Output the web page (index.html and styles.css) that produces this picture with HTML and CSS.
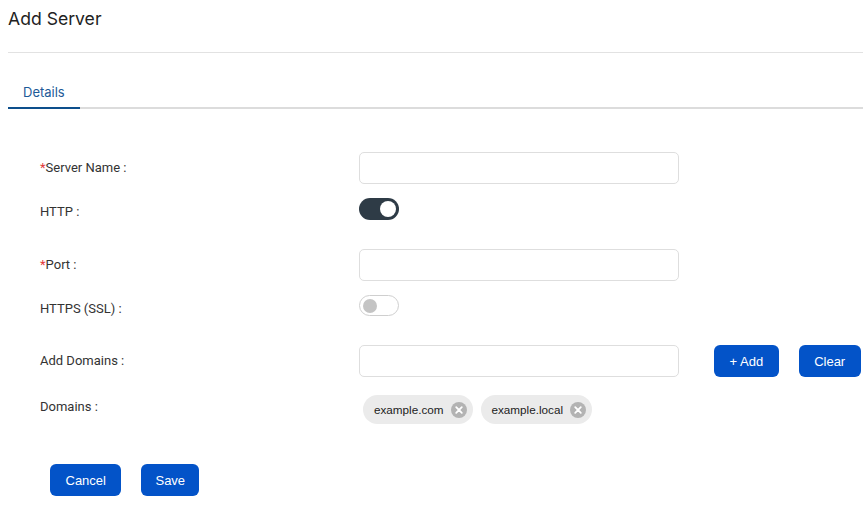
FILE: index.html
```html
<!DOCTYPE html>
<html>
<head>
<meta charset="utf-8">
<link rel="stylesheet" href="styles.css">
</head>
<body>
<div class="page">
  <h1 class="title">Add Server</h1>
  <div class="divider"></div>
  <div class="tabs">
    <div class="tab active">Details</div>
  </div>
  <div class="form">
    <div class="row row-input">
      <label class="label"><span class="req">*</span>Server Name :</label>
      <input class="input" type="text">
    </div>
    <div class="row row-toggle row-gap-29">
      <label class="label">HTTP :</label>
      <span class="toggle on"><span class="knob"></span></span>
    </div>
    <div class="row row-input">
      <label class="label"><span class="req">*</span>Port :</label>
      <input class="input" type="text">
    </div>
    <div class="row row-toggle row-gap-28">
      <label class="label">HTTPS (SSL) :</label>
      <span class="toggle off"><span class="knob"></span></span>
    </div>
    <div class="row row-input row-gap-md">
      <label class="label">Add Domains :</label>
      <input class="input" type="text">
      <button class="btn btn-add">+ Add</button>
      <button class="btn btn-clear">Clear</button>
    </div>
    <div class="row row-chips">
      <label class="label">Domains :</label>
      <div class="chips">
        <span class="chip">example.com<span class="chip-x"><svg width="16" height="16" viewBox="0 0 16 16"><circle cx="8" cy="8" r="8" fill="#b3b3b3"/><path d="M5.2 5.2L10.8 10.8M10.8 5.2L5.2 10.8" stroke="#fff" stroke-width="1.8" stroke-linecap="round"/></svg></span></span>
        <span class="chip">example.local<span class="chip-x"><svg width="16" height="16" viewBox="0 0 16 16"><circle cx="8" cy="8" r="8" fill="#b3b3b3"/><path d="M5.2 5.2L10.8 10.8M10.8 5.2L5.2 10.8" stroke="#fff" stroke-width="1.8" stroke-linecap="round"/></svg></span></span>
      </div>
    </div>
  </div>
  <div class="actions">
    <button class="btn btn-cancel">Cancel</button>
    <button class="btn btn-save">Save</button>
  </div>
</div>
</body>
</html>
```

FILE: styles.css
```css
* { box-sizing: border-box; }
html, body { margin: 0; padding: 0; background: #fff; }
body { font-family: Inter, "Noto Sans", sans-serif; color: #333; }
.page { padding: 8px 0 0 8px; }
.title {
  margin: 0;
  font-size: 17.6px;
  line-height: 22px;
  font-weight: 400;
  color: #222;
}
.divider { height: 1px; background: #e2e2e2; margin-top: 22px; }
.tabs {
  display: flex;
  margin-top: 31px;
  border-bottom: 2px solid #dcdcdc;
}
.tab {
  font-size: 13px;
  line-height: 16px;
  padding: 0 15px 7px;
  color: #1d5a98;
  margin-bottom: -2px;
  border-bottom: 2px solid transparent;
}
.tab.active { border-bottom-color: #0d4f8c; }
.form { padding-left: 32px; margin-top: 43px; }
.row { display: flex; align-items: center; }
.label {
  width: 319px;
  flex: none;
  font-family: Roboto, "Noto Sans", sans-serif;
  font-size: 13px;
  line-height: 16px;
  color: #333;
}
.req { color: #e23b3b; }
.row-input { height: 32px; margin-bottom: 14px; }
.row-toggle { align-items: flex-start; height: 22px; }
.row-toggle .label { padding-top: 6px; }
.row-gap-29 { margin-bottom: 29px; }
.row-gap-28 { margin-bottom: 28px; }
.row-input.row-gap-md { margin-bottom: 18px; }
.input {
  width: 320px;
  height: 32px;
  border: 1px solid #dedede;
  border-radius: 5px;
  background: #fff;
  outline: none;
  margin: 0;
  padding: 0 8px;
}
.toggle {
  position: relative;
  display: inline-block;
  width: 40px;
  height: 22px;
  border-radius: 11px;
}
.toggle.on { background: #2e3b46; }
.toggle.off { background: #fff; border: 1px solid #cfcfcf; height: 21px; }
.knob {
  position: absolute;
  border-radius: 50%;
}
.toggle.on .knob { width: 16px; height: 16px; top: 3px; right: 3px; background: #fff; }
.toggle.off .knob { width: 14px; height: 14px; top: 3px; left: 3px; background: #c4c4c4; }
.btn {
  height: 32px;
  padding: 0 15px;
  border: none;
  border-radius: 6px;
  background: #0353c8;
  color: #fff;
  font-family: "Liberation Sans", Arial, sans-serif;
  font-size: 13px;
  cursor: pointer;
}
.btn-add { margin-left: 35px; padding: 0 15.5px; }
.btn-clear { margin-left: 20px; padding: 0 15.5px; }
.btn-cancel { padding: 0 15.5px; }
.btn-save { padding: 0 14px; }
.row-chips { align-items: flex-start; height: 29px; }
.row-chips .label { padding-top: 4px; }
.chips { display: flex; gap: 8px; margin-left: 4px; }
.chip {
  display: inline-flex;
  align-items: center;
  height: 29px;
  padding: 0 6px 0 11px;
  border-radius: 15px;
  background: #ebebeb;
  font-family: "Liberation Sans", Arial, sans-serif;
  font-size: 11.7px;
  color: #222;
}
.chip-x { display: inline-flex; margin-left: 7px; }
.actions { display: flex; gap: 20px; padding-left: 42px; margin-top: 40px; }
```
